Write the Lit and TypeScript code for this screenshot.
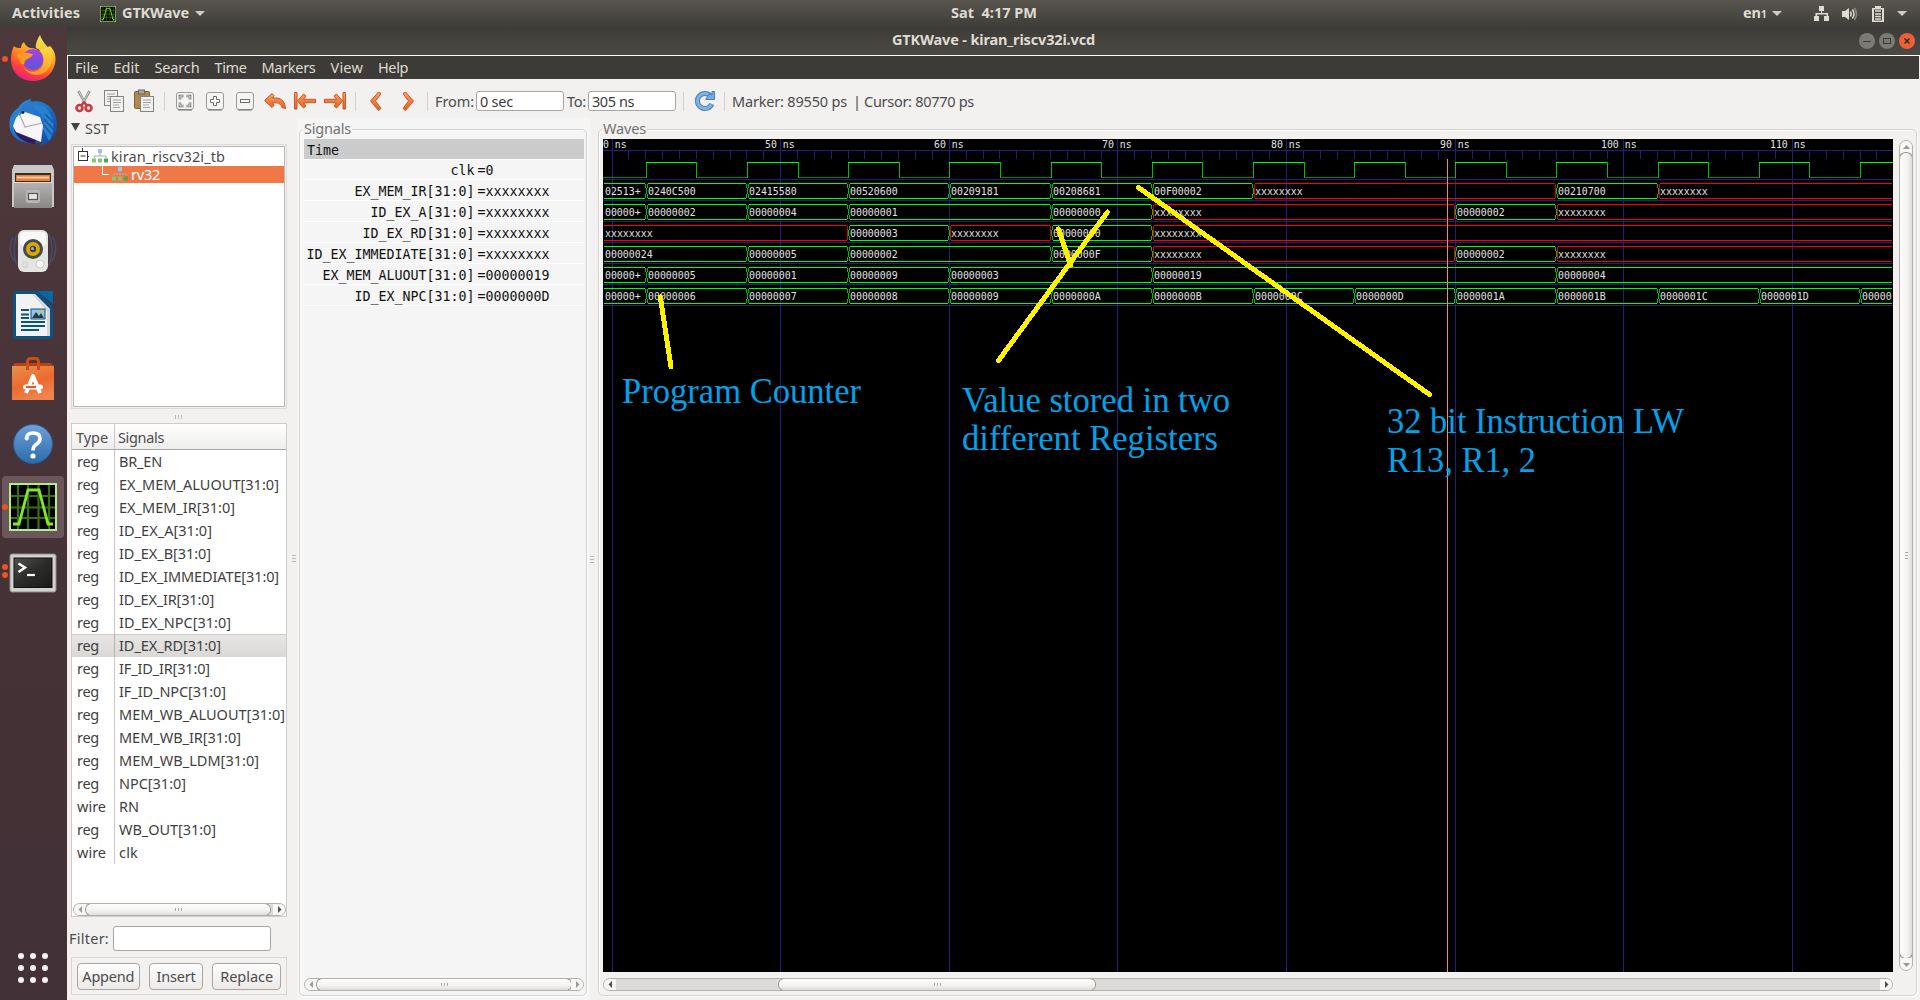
import { LitElement, html, svg, css } from "lit";
import { customElement, property } from "lit/decorators.js";

/* ---------- text label with a fixed advance width ---------- */
@customElement("fit-text")
class FitText extends LitElement {
  @property() text = "";
  @property({ type: Number }) w = 0;
  static styles = css`
    :host { display: inline-block; white-space: pre; }
    span { display: inline-block; }
  `;
  updated() {
    const s = this.renderRoot.querySelector("span") as HTMLElement;
    s.style.letterSpacing = "0px";
    const natural = s.getBoundingClientRect().width;
    const n = [...this.text].length;
    if (this.w && n) {
      s.style.letterSpacing = `${(this.w - natural) / n}px`;
      this.style.width = `${this.w}px`;
    }
  }
  render() {
    return html`<span>${this.text}</span>`;
  }
}

const t = (text: string, w: number) => html`<fit-text .text=${text} .w=${w}></fit-text>`;

/* ---------- scroll bar ---------- */
@customElement("gtk-scroll")
class GtkScroll extends LitElement {
  @property() dir = "h";
  @property({ type: Number }) before = 0;
  @property({ type: Number }) after = 0;
  @property() dim = "both";
  static styles = css`
    :host { display: block; }
    .bar { display: flex; box-sizing: border-box; width: 100%; height: 100%; border: 1px solid #b3b0ac; border-radius: 7px; background: #dcdbd9; overflow: hidden; }
    .bar.v { flex-direction: column; }
    .end { flex: none; display: flex; align-items: center; justify-content: center; background: #f6f6f5; }
    .h .end { width: 12px; }
    .v .end { height: 12px; }
    .thumb { flex: 1; display: flex; align-items: center; justify-content: center; gap: 2px; border-radius: 7px; background: linear-gradient(#fdfdfc, #f3f2f1 60%, #dedcda); box-shadow: 0 0 0 1px #92908c; }
    .v .thumb { flex-direction: column; background: linear-gradient(90deg, #fdfdfc, #f3f2f1 60%, #dedcda); }
    .thumb i { width: 1px; height: 3px; background: #aaa; }
    .v .thumb i { width: 3px; height: 1px; }
    .gap { flex: none; }
    .a { fill: #9a9a98; }
    .d { fill: #4f4f4d; }
  `;
  render() {
    const v = this.dir === "v";
    const first = v ? "M0 5L3.5 1L7 5Z" : "M5 0L1.5 3.5L5 7Z";
    const last = v ? "M0 2L3.5 6L7 2Z" : "M2 0L5.5 3.5L2 7Z";
    const size = (n: number) => (v ? `height:${n}px` : `width:${n}px`);
    const cls = (side: string) => (this.dim === side || this.dim === "both" ? "a" : "d");
    return html`<div class="bar ${v ? "v" : "h"}">
      <div class="end"><svg width="7" height="7"><path class=${cls("first")} d=${first} /></svg></div>
      <div class="gap" style=${size(this.before)}></div>
      <div class="thumb"><i></i><i></i><i></i></div>
      <div class="gap" style=${size(this.after)}></div>
      <div class="end"><svg width="7" height="7"><path class=${cls("last")} d=${last} /></svg></div>
    </div>`;
  }
}

/* ---------- waveform area ---------- */
const X = "xxxxxxxx";
const BUSES: [number, string][][] = [
  [[40, "02513+"], [42, "0240C500"], [48, "02415580"], [54, "00520600"], [60, "00209181"], [66, "00208681"], [72, "00F00002"], [78, X], [96, "00210700"], [102, X]],
  [[40, "00000+"], [42, "00000002"], [48, "00000004"], [54, "00000001"], [66, "00000000"], [72, X], [90, "00000002"], [96, X]],
  [[40, X], [54, "00000003"], [60, X], [66, "00000000"], [72, X]],
  [[40, "00000024"], [48, "00000005"], [54, "00000002"], [66, "0000000F"], [72, X], [90, "00000002"], [96, X]],
  [[40, "00000+"], [42, "00000005"], [48, "00000001"], [54, "00000009"], [60, "00000003"], [72, "00000019"], [96, "00000004"]],
  [[40, "00000+"], [42, "00000006"], [48, "00000007"], [54, "00000008"], [60, "00000009"], [66, "0000000A"], [72, "0000000B"], [78, "0000000C"], [84, "0000000D"], [90, "0000001A"], [96, "0000001B"], [102, "0000001C"], [108, "0000001D"], [114, "00000"]],
];
const W = 1290;
const H = 833;
const pos = (ns: number) => 9 + 16.866 * (ns - 40);

@customElement("wave-view")
class WaveView extends LitElement {
  static styles = css`
    :host { display: block; width: 1290px; height: 833px; }
    svg { display: block; background: #000; }
    .px { shape-rendering: crispEdges; }
    .grid { fill: #20207c; }
    .g { fill: #00ff00; }
    .gv { fill: #00c000; }
    .gl { fill: #008800; }
    .r { fill: #ff0000; }
    .rv { fill: #e00000; }
    .marker { fill: #f58484; }
    .txt { font: 11px "DejaVu Sans Mono", "Liberation Mono", monospace; fill: #e2e2e2; }
    .note { font: 35px "Liberation Serif", "Times New Roman", serif; fill: #00a2e8; }
    .pen { stroke: #fff200; stroke-width: 5; stroke-linecap: round; fill: none; shape-rendering: crispEdges; }
  `;
  rect(c: string, x: number, y: number, w: number, h: number) {
    return svg`<rect class=${c} x=${x} y=${y} width=${w} height=${h} />`;
  }
  label(s: string, x: number, y: number) {
    return svg`<text class="txt" x=${x} y=${y} textLength=${s.length * 6 - 0.4} lengthAdjust="spacingAndGlyphs">${s}</text>`;
  }
  grid() {
    const out = [this.rect("grid", 0, 11, W, 1)];
    for (let k = 0; k <= 75; k++) {
      const x = Math.floor(pos(40 + k));
      out.push(k % 10 === 0 ? this.rect("grid", x, 0, 1, H) : this.rect("grid", x, 12, 1, 8));
    }
    for (let k = 0; k < 7; k++) out.push(this.rect("grid", 0, 40 + 21 * k, W, 1));
    return out;
  }
  clock() {
    const out = [this.rect("gl", 0, 38, 43, 1)];
    for (let ns = 42; ns < 118; ns += 6) {
      const a = Math.round(pos(ns));
      const b = Math.round(pos(ns + 3));
      const c = Math.round(pos(ns + 6));
      out.push(this.rect("gl", b, 38, c - b, 1));
      out.push(this.rect("gv", a, 23, 1, 16), this.rect("gv", b, 23, 1, 16));
      out.push(this.rect("g", a, 23, b - a, 1));
    }
    return out;
  }
  bus(spans: [number, string][], row: number) {
    const top = 44 + 21 * row;
    const bot = top + 15;
    return spans.map(([ns, value], i) => {
      const bad = value === X;
      const c = bad ? "r" : "g";
      const from = i === 0 ? 1 : Math.round(pos(ns)) + 2;
      const end = i + 1 < spans.length ? Math.round(pos(spans[i + 1][0])) : 0;
      const to = end ? end - 1 : 1289;
      const edge = (x: number, mid: number) => [
        this.rect(c + "v", x, top + 1, 1, 4),
        this.rect(c + "v", mid, top + 5, 1, 6),
        this.rect(c + "v", x, bot - 4, 1, 4),
      ];
      return [
        this.rect(c, from, top, to - from, 1),
        this.rect(c, from, bot, to - from, 1),
        i > 0 ? edge(from - 1, bad ? from - 1 : from - 2) : [],
        end ? edge(end - 1, bad ? end - 1 : end) : [],
        this.label(value, from + (i === 0 ? 1 : 0), top + 12),
      ];
    });
  }
  note(s: string, x: number, y: number, w: number) {
    return svg`<text class="note" x=${x} y=${y} textLength=${w} lengthAdjust="spacingAndGlyphs">${s}</text>`;
  }
  render() {
    return html`<svg width=${W} height=${H} viewBox="0 0 ${W} ${H}">
      <g class="px">${this.grid()}</g>
      ${[40, 50, 60, 70, 80, 90, 100, 110].map((n) => {
        const s = n === 40 ? "0 ns" : `${n} ns`;
        return this.label(s, n === 40 ? 0 : Math.floor(pos(n)) - (n > 99 ? 22 : 15), 9);
      })}
      <g class="px">${this.clock()}</g>
      <g class="px">${BUSES.map((b, i) => this.bus(b, i))}</g>
      <rect class="marker px" x="844" y="20" width="1" height="813" />
      <path class="pen" d="M57.3 158L68 228M395.5 221.500L504.500 73M455.500 90L467.500 126M535.500 48.500L826.500 255.500" />
      ${this.note("Program Counter", 19, 264, 239)}
      ${this.note("Value stored in two", 359, 272.500, 268)}
      ${this.note("different Registers", 359, 311, 256)}
      ${this.note("32 bit Instruction LW", 784, 293.500, 297)}
      ${this.note("R13, R1, 2", 784, 332.500, 149)}
    </svg>`;
  }
}

/* ---------- dock icons, 48 x 48 ---------- */
const gtkwave = (s: number) => html`<svg width=${s} height=${s} viewBox="0 0 48 48">
  <rect x="0" y="0" width="48" height="48" fill="#b6ec86" /><rect x="2" y="2" width="44" height="44" fill="#000" />
  <path d="M9 2V46M19 2V46M29.500 2V46M40 2V46M2 13H46M2 24.500H46M2 35H46" stroke="#3b6e12" stroke-width="2.200" />
  <path d="M4 41H10L19 7H30L39 41H44" fill="none" stroke="#84e62e" stroke-width="2.800" /></svg>`;

const firefox = html`<svg width="48" height="48" viewBox="0 0 48 48">
  <defs>
    <linearGradient id="fa" x1="0.8" y1="0" x2="0.300" y2="1"><stop offset="0" stop-color="#ffe43a" /><stop offset="0.450" stop-color="#ff8a1e" /><stop offset="0.750" stop-color="#ff4040" /><stop offset="1" stop-color="#e21c83" /></linearGradient>
    <linearGradient id="fb" x1="0" y1="0" x2="0" y2="1"><stop offset="0" stop-color="#a842e6" /><stop offset="1" stop-color="#5a55d6" /></linearGradient>
    <linearGradient id="fc" x1="0" y1="0" x2="0" y2="1"><stop offset="0" stop-color="#fff44f" /><stop offset="1" stop-color="#ffa022" /></linearGradient>
  </defs>
  <path d="M5 11C7 13 9 13 12 13C12 10 13 9 15 7C16 10 18 12 21 13C25 13 28 14 30 16L41 11C45 15 46.500 19 46.500 24C46 37 37 46 24 46C11 46 2 37 2 24C2 19 3 15 5 11Z" fill="url(#fa)" />
  <circle cx="24" cy="24.500" r="10.500" fill="url(#fb)" />
  <path d="M31 0C29 3 26 9 27 13C34 16 37 24 33 32C29 38 20 38 15 33C20 41 33 43 39 34C45 28 45 18 41 11C41 13 42 14 42 16C38 11 33 6 31 0Z" fill="url(#fc)" opacity="0.920" />
  <path d="M8 20C12 16 18 18 24 19C23 23 18 23 16 26C15 28 16 30 13 29C10 27 9 23 8 20Z" fill="#ff9a1f" />
</svg>`;

const thunderbird = html`<svg width="48" height="48" viewBox="0 0 48 48">
  <defs><linearGradient id="ta" x1="0" y1="0" x2="1" y2="1"><stop offset="0" stop-color="#2f8fd8" /><stop offset="0.500" stop-color="#1f6fc8" /><stop offset="1" stop-color="#123f90" /></linearGradient></defs>
  <path d="M9 9C12 4 16 1 22 0L21 3C35 -1 48 10 48 25C48 38 41 44 31 47L33 43C22 46 8 45 2 33C-1 25 0 15 9 9Z" fill="url(#ta)" />
  <path d="M5 31C8 39 16 44 26 45L28 38Z" fill="#321a5e" />
  <path d="M7 19L13 12L31 18L34 27L32 43L7 33L4 27Z" fill="#f6f6f8" />
  <path d="M10 14L16 28L33 24" fill="none" stroke="#a9abb5" stroke-width="1.200" />
  <path d="M10 17C11 8 17 3 23 2C21 6 22 9 26 11C20 12 13 13 10 17Z" fill="#2a78c6" />
  <path d="M26 11C34 14 36 22 34 30L40 42C47 32 46 18 36 8C31 5 25 6 23 6Z" fill="#2782cd" />
  <path d="M36 15L45 24M35 20L46 32M35 26L43 36" stroke="#1b56a8" stroke-width="1.500" /><circle cx="14" cy="13.500" r="1.300" fill="#111" /></svg>`;

const files = html`<svg width="48" height="48" viewBox="0 0 48 48">
  <defs><linearGradient id="ga" x1="0" y1="0" x2="0" y2="1"><stop offset="0" stop-color="#b4b3b1" /><stop offset="1" stop-color="#888785" /></linearGradient></defs>
  <path d="M5 2H43L45 7V44H3V7Z" fill="#c9c8c6" /><rect x="6" y="10" width="36" height="10" fill="#3b2a22" />
  <path d="M7 12H41V18H7Z" fill="#e88237" /><path d="M8 14.500H40" stroke="#ffe3c4" stroke-width="1.500" />
  <path d="M5 19H43V45H5Z" fill="url(#ga)" /><path d="M5 19.500H43" stroke="#dedddb" />
  <rect x="17" y="27" width="14" height="13" rx="2" fill="#b9b8b6" /><rect x="19.500" y="30.500" width="9" height="6" fill="#e6e6e6" stroke="#555" stroke-width="1.200" /></svg>`;

const rhythm = html`<svg width="48" height="48" viewBox="0 0 48 48">
  <path d="M4 10Q-2 22 5 34M8 7Q2 22 8 38M44 10Q50 22 43 34M40 7Q46 22 40 38" fill="none" stroke="#49557f" stroke-width="1.500" opacity="0.700" />
  <rect x="9" y="3" width="30" height="42" rx="6" fill="#e4e4e2" /><rect x="11" y="5" width="26" height="14" rx="4" fill="#f8f8f7" />
  <circle cx="24" cy="22" r="10" fill="#45484c" /><circle cx="24" cy="22" r="7" fill="#d9a900" /><circle cx="24" cy="22" r="3.200" fill="#3c4048" /><circle cx="23.500" cy="21.500" r="1.500" fill="#a9b1bd" />
  <circle cx="31" cy="37" r="4" fill="#f9f9f8" stroke="#c9c9c6" /><rect x="14" y="35" width="4" height="5" fill="none" stroke="#cfcfcc" /></svg>`;

const writer = html`<svg width="48" height="48" viewBox="0 0 48 48">
  <path d="M7 0H28L44 16V45Q44 48 41 48H7Q4 48 4 45V3Q4 0 7 0Z" fill="#0b5384" /><path d="M7 3H26L41 18V45H7Z" fill="#f2f2f2" />
  <path d="M28 0H44V13Z" fill="#0368a4" /><path d="M25 3L41 19V45H38V20L23 3Z" fill="#d5d5d5" />
  <path d="M12 19H20M12 23.500H20M12 27H20M12 31H36M12 35H36M12 39H30" stroke="#0b5384" stroke-width="2" />
  <rect x="22" y="18" width="14" height="10" fill="#8fc8e8" stroke="#0b5384" /><path d="M23 27L27 21L30 25L32 22L35 27Z" fill="#2e3a40" /><circle cx="33" cy="20.500" r="1.500" fill="#efbd2e" /></svg>`;

const software = html`<svg width="48" height="48" viewBox="0 0 48 48">
  <defs><linearGradient id="sa" x1="0" y1="0" x2="0.400" y2="1"><stop offset="0" stop-color="#e6914f" /><stop offset="0.600" stop-color="#ec6a2c" /><stop offset="1" stop-color="#f0824e" /></linearGradient></defs>
  <path d="M3 12L6 8H42L45 12Z" fill="#b94013" /><rect x="3" y="11" width="42" height="34" fill="url(#sa)" />
  <path d="M18.500 15V7Q18.500 3.500 22 3.500H26Q29.500 3.500 29.500 7V15" fill="none" stroke="#cf4a1b" stroke-width="3" />
  <path d="M17 38L24 21L31 38" fill="none" stroke="#fff" stroke-width="4" stroke-linejoin="round" /><rect x="14" y="29.500" width="20" height="5" rx="2.500" fill="#fff" /><rect x="17" y="31" width="10" height="2" fill="#e95420" /></svg>`;

const help = html`<svg width="48" height="48" viewBox="0 0 48 48">
  <defs><linearGradient id="ha" x1="0" y1="0" x2="0" y2="1"><stop offset="0" stop-color="#6f9fd8" /><stop offset="1" stop-color="#2b6cab" /></linearGradient></defs>
  <circle cx="24" cy="25" r="19.500" fill="url(#ha)" stroke="#275e9b" />
  <path d="M17.500 20Q17.500 14 24 14Q31 14 31 19.500Q31 23 27 25.500Q24 27.500 24 31.500" fill="none" stroke="#fff" stroke-width="3.600" /><circle cx="17.800" cy="19.500" r="2" fill="#fff" /><circle cx="24" cy="37" r="2.600" fill="#fff" /></svg>`;

const terminal = html`<svg width="48" height="48" viewBox="0 0 48 48">
  <defs><linearGradient id="tt" x1="0" y1="0" x2="1" y2="1"><stop offset="0" stop-color="#50504e" /><stop offset="0.500" stop-color="#2b2b2a" /><stop offset="1" stop-color="#1a1a19" /></linearGradient></defs>
  <rect x="1" y="7" width="46" height="38" rx="2" fill="#d3d2d0" stroke="#8b8a88" /><rect x="5" y="11" width="38" height="29.500" fill="url(#tt)" stroke="#111" />
  <path d="M9.500 16.500L16 20.500L9.500 25" fill="none" stroke="#fff" stroke-width="2.400" /><path d="M18 28H26" stroke="#fff" stroke-width="2.200" /></svg>`;

/* ---------- toolbar icons, 24 x 24 ---------- */
const tb = (inner: unknown) => html`<svg width="24" height="24" viewBox="0 0 24 24">${inner}</svg>`;
const page = (x: number, y: number) => svg`<rect x=${x} y=${y} width="13" height="15" fill="#f0f0ee" stroke="#848480" />
  <path d=${`M${x + 2.500} ${y + 3.500}h8M${x + 2.500} ${y + 6}h8M${x + 2.500} ${y + 8.500}h6M${x + 2.500} ${y + 11}h7`} stroke="#a5a5a2" />`;
const cut = tb(svg`<path d="M6.500 2L14 16M17.500 2L10 16" stroke="#8a8a88" stroke-width="2.600" /><path d="M7 2.500L13 14M17 2.500L11 14" stroke="#d4d4d2" />
  <ellipse cx="7.500" cy="19" rx="3" ry="3" fill="none" stroke="#cc3a3f" stroke-width="2.600" /><ellipse cx="16.500" cy="19" rx="3" ry="3" fill="none" stroke="#cc3a3f" stroke-width="2.600" /><path d="M9 16.500L12 13L15 16.500" fill="none" stroke="#cc3a3f" stroke-width="2" />`);
const copy = tb(svg`${page(2.5, 1.5)}${page(8.5, 7.5)}`);
const paste = tb(svg`<rect x="2.500" y="2.500" width="15" height="17" rx="1" fill="#b08850" stroke="#83602f" /><rect x="6.500" y="1" width="6" height="4" fill="#a8a8a4" stroke="#666" />${page(8.5, 7.5)}`);
const box = svg`<rect x="3.500" y="3.500" width="17" height="17" rx="2.500" fill="#f4f4f2" stroke="#9a9a97" /><path d="M5 21H19" stroke="#6f6f6c" />`;
const fit = tb(svg`${box}<path d="M7 10.500V7H10.500M13.500 7H17V10.500M17 13.500V17H13.500M10.500 17H7V13.500" fill="none" stroke="#6d6d6a" stroke-width="2.600" /><path d="M7 10.500V7H10.500M13.500 7H17V10.500M17 13.500V17H13.500M10.500 17H7V13.500" fill="none" stroke="#fff" stroke-width="0.800" />`);
const plus = tb(svg`${box}<path d="M10.500 7.500H13.500V10.500H16.500V13.500H13.500V16.500H10.500V13.500H7.500V10.500H10.500Z" fill="#fff" stroke="#6d6d6a" />`);
const minus = tb(svg`${box}<rect x="7.500" y="10.500" width="9" height="3" fill="#fff" stroke="#6d6d6a" />`);
const grad = svg`<defs><linearGradient id="o" x1="0" y1="0" x2="0" y2="1"><stop offset="0" stop-color="#f5a45c" /><stop offset="1" stop-color="#ea5e2a" /></linearGradient></defs>`;
const undo = tb(svg`${grad}<path d="M1.500 11.500L9 4.500L11 6.500L9.500 9H14Q22 10 22.500 19.500L19 18.500Q18 14 13 13.800H9.500L11 16.500L9 18.500Z" fill="url(#o)" stroke="#d05525" />`);
const first = tb(svg`${grad}<path d="M1.500 3.500H4V20H1.500ZM4.500 12L10.500 5L13 7L10.500 10.300H22.500V13.700H10.500L13 17L10.500 19Z" fill="url(#o)" stroke="#d05525" />`);
const last = tb(svg`${grad}<path d="M22.500 3.500H20V20H22.500ZM19.500 12L13.500 5L11 7L13.500 10.300H1.500V13.700H13.500L11 17L13.500 19Z" fill="url(#o)" stroke="#d05525" />`);
const prev = tb(svg`${grad}<path d="M14.500 3L17 4.500L11.500 12L17 19.500L14.500 21.500L6.500 12Z" fill="url(#o)" stroke="#d05525" stroke-linejoin="round" />`);
const next = tb(svg`${grad}<path d="M9.500 3L7 4.500L12.500 12L7 19.500L9.500 21.500L17.500 12Z" fill="url(#o)" stroke="#d05525" stroke-linejoin="round" />`);
const reload = tb(svg`<path d="M18.800 15A7.500 7.500 0 1 1 17.500 7" fill="none" stroke="#4482bf" stroke-width="5" /><path d="M18.500 15.500A7.500 7.500 0 1 1 17.500 7" fill="none" stroke="#86b2e0" stroke-width="3" /><path d="M12.500 10.500L21.500 10.500V2.500H19V6L16 5Z" fill="#7cabdc" stroke="#4482bf" />`);
const tree = html`<svg class="node" width="16" height="14" viewBox="0 0 16 14"><rect x="6" y="0" width="4" height="4" fill="#9cc3ee" /><path d="M8 4V7M2 9V7H14V9" fill="none" stroke="#aaa" />
  <rect x="0" y="9.500" width="4" height="4" fill="#7ccb74" /><rect x="6" y="9.500" width="4" height="4" fill="#7ccb74" /><rect x="12" y="9.500" width="4" height="4" fill="#4fa64b" /></svg>`;
const caret = html`<svg class="caret" width="10" height="5"><path d="M0 0H10L5 5Z" fill="#d0cdc6" /></svg>`;

const ROWS: [string, string, number][] = [
  ["reg", "BR_EN", 43], ["reg", "EX_MEM_ALUOUT[31:0]", 160], ["reg", "EX_MEM_IR[31:0]", 116], ["reg", "ID_EX_A[31:0]", 93],
  ["reg", "ID_EX_B[31:0]", 92], ["reg", "ID_EX_IMMEDIATE[31:0]", 160], ["reg", "ID_EX_IR[31:0]", 95], ["reg", "ID_EX_NPC[31:0]", 112],
  ["reg", "ID_EX_RD[31:0]", 102], ["reg", "IF_ID_IR[31:0]", 91], ["reg", "IF_ID_NPC[31:0]", 107], ["reg", "MEM_WB_ALUOUT[31:0]", 166],
  ["reg", "MEM_WB_IR[31:0]", 122], ["reg", "MEM_WB_LDM[31:0]", 140], ["reg", "NPC[31:0]", 67], ["wire", "RN", 20], ["reg", "WB_OUT[31:0]", 97], ["wire", "clk", 19],
];
const SIGNALS: [string, string][] = [
  ["clk", "0"], ["EX_MEM_IR[31:0]", X], ["ID_EX_A[31:0]", X], ["ID_EX_RD[31:0]", X], ["ID_EX_IMMEDIATE[31:0]", X], ["EX_MEM_ALUOUT[31:0]", "00000019"], ["ID_EX_NPC[31:0]", "0000000D"],
];

@customElement("app-root")
class AppRoot extends LitElement {
  static styles = css`
    :host { display: block; width: 1920px; height: 1000px; overflow: hidden; font: 14.5px "Noto Sans", "Open Sans", sans-serif; color: #4c4c4c; background: #f2f1f0; }
    * { box-sizing: border-box; }
    svg { display: block; }
    .topbar { display: flex; align-items: center; height: 27px; line-height: 27px; background: linear-gradient(#59564f, #3e3d39); color: #dfdbd2; font-weight: 700; padding-left: 12px; }
    .topbar fit-text { margin-top: -1px; height: 28px; line-height: 26px; }
    .topbar .app { display: flex; align-items: center; margin-left: 20px; gap: 6px; width: 851px; }
    .topbar .lang { margin-left: 706px; display: flex; align-items: center; gap: 5px; }
    .topbar .tray { margin-left: 32px; display: flex; align-items: center; }
    .sub { font-size: 10px; }
    .below { display: flex; height: 973px; }
    .dock { width: 67px; flex: none; display: flex; flex-direction: column; background: linear-gradient(#4f383c, #443237 60%, #423136); }
    .slot { height: 64px; flex: none; display: grid; grid-template-columns: 2px 6px 1px 48px; align-items: center; }
    .slot .pips { grid-column: 2; display: flex; flex-direction: column; gap: 2px; }
    .slot .pips i { width: 6px; height: 6px; border-radius: 3px; background: #e95420; }
    .slot svg { grid-column: 4; }
    .slot.on { margin: 1px 3px 1px 2px; height: 62px; border-radius: 4px; background: #6b565b; grid-template-columns: 0 6px 1px 48px; }
    .apps { margin: auto 0 17px 18px; display: grid; grid-template-columns: repeat(3, 6px); gap: 6px; }
    .apps i { width: 6px; height: 6px; border-radius: 3px; background: #f4f2f0; }
    .win { flex: 1; display: flex; flex-direction: column; min-width: 0; }
    .title { display: flex; height: 29px; padding-left: 825px; padding-right: 5px; line-height: 25px; font-weight: 700; color: #dfdbd2; background: linear-gradient(#3c3b37, #4b4a44); border-bottom: 1px solid #fff; flex: none; }
    .title .btns { margin-left: auto; padding-top: 6px; display: flex; gap: 4px; }
    .menu { display: flex; flex: none; gap: 15px; height: 23px; line-height: 22px; margin: 0 1px; padding-left: 7px; background: #3c3b37; color: #dfdbd2; }
    .tools { display: flex; flex: none; align-items: center; height: 39px; padding: 5px 0 0 2px; }
    .tools > svg { margin: 0 3px; }
    .tools > fit-text { line-height: 20px; margin-top: -1px; }
    .tools .sep { width: 1px; height: 19px; background: #d5d3d1; margin: 0 5px; }
    .entry { height: 20px; line-height: 18px; background: #fff; border: 1px solid #a9a6a2; border-radius: 3px; padding-left: 3px; color: #3c3c3c; }
    .tools .entry { width: 88px; }
    .body { display: flex; flex: 1; min-height: 0; }
    .left { width: 230px; flex: none; display: flex; flex-direction: column; padding-left: 4px; }
    .sst { display: flex; height: 26px; align-items: flex-start; line-height: 20px; gap: 5px; flex: none; }
    .sst svg { margin-top: 5px; }
    .tree { width: 216px; height: 265px; margin-bottom: 13px; flex: none; border: 1px solid #dddbd9; padding: 1px; }
    .tree .in { height: 100%; border: 1px solid #b9b6b2; background: #fff; padding-top: 1px; }
    .trow { display: flex; height: 17px; line-height: 16px; }
    .trow.first { height: 18px; line-height: 17px; padding-left: 4px; }
    .trow.sel { background: #f07746; color: #fff; padding-left: 28px; }
    .node { margin: 1px 3px 0 3px; }
    .grip { display: flex; gap: 2px; }
    .grip i { width: 1px; height: 4px; background: #bbb8b5; }
    .grip.h { justify-content: center; height: 4px; margin: -7px 12px 4px 0; flex: none; }
    .grip.v { flex-direction: column; width: 4px; }
    .grip.v i { width: 4px; height: 1px; }
    .table { width: 216px; height: 494px; flex: none; border: 1px solid #cfccca; background: #fff; display: flex; flex-direction: column; }
    .head { display: flex; height: 26px; flex: none; line-height: 26px; border-bottom: 1px solid #a9a6a0; background: linear-gradient(#fff, #ededec); }
    .c1 { width: 43px; flex: none; padding-left: 5px; border-right: 1px solid #cbc9c7; }
    .c2 { padding-left: 4px; white-space: nowrap; }
    .head .c2 { padding-left: 3px; }
    .head .c1 { padding-left: 4px; }
    .row { display: flex; height: 23px; line-height: 22px; flex: none; color: #3f3f3f; }
    .row.sel { background: linear-gradient(#e8e7e5, #dad8d6); box-shadow: inset 0 1px #cfcdca; }
    .row.sel .c1 { border-color: #b5b3b0; }
    .table gtk-scroll { margin: auto 0 0 1px; height: 13px; }
    .filter { display: flex; align-items: center; margin: 8px 0 6px -2px; height: 26px; flex: none; gap: 4px; line-height: 20px; }
    .filter .entry { width: 158px; height: 25px; }
    .buttons { display: flex; width: 216px; height: 38px; flex: none; gap: 9px; padding: 5px; border: 1px solid #d8d6d4; }
    .btn { height: 27px; line-height: 25px; border: 1px solid #a9a6a2; border-radius: 4px; background: linear-gradient(#fdfdfd, #eceae9); text-align: center; }
    .sigpane { width: 293px; flex: none; background: #f5f5f5; padding: 11px 3px 4px 2px; }
    .frame { border: 1px solid #d4d2d0; border-radius: 5px; height: 867px; box-shadow: inset 1px 1px #fff, 1px 1px #fff; }
    .legend { display: table; line-height: 18px; height: 20px; margin: -11px 0 0 3px; padding: 0 1px; background: inherit; color: #737270; }
    .sigpane .legend { background: #f5f5f5; }
    .siglist { width: 280px; height: 839px; margin: 0 0 0 4px; font: 13.3px "DejaVu Sans Mono", "Liberation Mono", monospace; color: #111; }
    .time { height: 20px; line-height: 20px; padding: 2px 0 0 3px; background: #cbcbcb; }
    .sig { display: grid; grid-template-columns: 170.5px 1fr; column-gap: 3px; height: 21px; line-height: 19px; padding-top: 1.5px; border-top: 1px solid #fff; }
    .sig:nth-child(2) { height: 20px; padding-top: 0.5px; }
    .sig span { text-align: right; white-space: pre; }
    .end { border-top: 1px solid #fff; }
    .sigpane gtk-scroll { width: 280px; height: 13px; margin-left: 4px; }
    .split { width: 8px; flex: none; display: flex; align-items: center; justify-content: flex-start; }
    .waves { flex: 1; padding: 11px 3px 4px 0; }
    .waves .legend { background: #f2f1f0; }
    .wgrid { display: grid; grid-template-columns: 1290px 14px; column-gap: 6px; row-gap: 6px; margin-left: 4px; }
    .wgrid .vs { height: 831px; margin-top: 1px; }
    .wgrid .hs { height: 13px; }
    .left .grip.edge { position: absolute; left: 292px; top: 555px; }
  `;
  slot(icon: unknown, pips = 0, on = false) {
    return html`<div class="slot ${on ? "on" : ""}"><div class="pips">${Array.from({ length: pips }, () => html`<i></i>`)}</div>${icon}</div>`;
  }
  render() {
    const bars = html`<i></i><i></i><i></i>`;
    return html`
      <div class="topbar">
        ${t("Activities", 68)}
        <div class="app">${gtkwave(16)} ${t("GTKWave", 67)} ${caret}</div>
        ${t("Sat  4:17 PM", 86)}
        <div class="lang"><span>${t("en", 18)}<span class="sub">1</span></span>${caret}</div>
        <div class="tray">
          <svg width="16" height="16" viewBox="0 0 16 16" fill="#dfdbd2"><path d="M5 0H10V5H8V7H14V10H15V15H10V10H12.500V8.500H3V10H5V15H0V10H1.500V7H7V5H5Z" /></svg>
          <svg style="margin-left:12px" width="16" height="16" viewBox="0 0 16 16"><path d="M0 5H3L7 2V14L3 11H0Z" fill="#dfdbd2" /><path d="M8.500 5.500Q10 8 8.500 10.500M10.500 3.500Q13.500 8 10.500 12.500" fill="none" stroke="#dfdbd2" stroke-width="1.500" /><path d="M12.500 2Q16.500 8 12.500 14" fill="none" stroke="#8a8780" stroke-width="1.500" /></svg>
          <svg style="margin-left:14px" width="13" height="16" viewBox="0 0 13 16"><path d="M3 2V0H9V2H12V16H0V2Z" fill="#dfdbd2" /><path d="M2 3.500H10V14.500H2Z" fill="#45443f" /><path d="M3 5H9M3 8H9M3 10.500H9M3 13H9" stroke="#dfdbd2" stroke-width="1.500" /></svg>
          <span style="margin-left:12px">${caret}</span>
        </div>
      </div>
      <div class="below">
        <div class="dock">
          ${this.slot(firefox, 1)} ${this.slot(thunderbird)} ${this.slot(files)} ${this.slot(rhythm)} ${this.slot(writer)} ${this.slot(software)}
          ${this.slot(help)} ${this.slot(gtkwave(48), 1, true)} ${this.slot(terminal, 2)}
          <div class="apps">${Array.from({ length: 9 }, () => html`<i></i>`)}</div>
        </div>
        <div class="win">
          <div class="title">
            ${t("GTKWave - kiran_riscv32i.vcd", 203)}
            <div class="btns">
              <svg width="16" height="16"><circle cx="8" cy="8" r="8" fill="#7b7a75" /><path d="M4 8.500H12" stroke="#3c3b37" /></svg>
              <svg width="16" height="16"><circle cx="8" cy="8" r="8" fill="#7b7a75" /><rect x="4.500" y="5.500" width="7" height="5" fill="none" stroke="#3c3b37" /></svg>
              <svg width="16" height="16"><circle cx="8" cy="8" r="8" fill="#ec6038" /><path d="M5.500 5.500L10.500 10.500M10.500 5.500L5.500 10.500" stroke="#3c2a20" stroke-width="1.500" /></svg>
            </div>
          </div>
          <div class="menu">${t("File", 23.5)}${t("Edit", 26)}${t("Search", 45)}${t("Time", 32)}${t("Markers", 54)}${t("View", 32.5)}${t("Help", 30)}</div>
          <div class="tools">
            ${cut}${copy}${paste}<div class="sep"></div>${fit}${plus}${minus}${undo}${first}${last}<div class="sep"></div>
            ${prev}<span style="width:2px"></span>${next}<div class="sep" style="margin:0 7px 0 4px"></div>
            ${t("From:", 39)}<div class="entry" style="margin:0 3px 0 2px">${t("0 sec", 33)}</div>
            ${t("To:", 19)}<div class="entry" style="margin:0 7px 0 2px">${t("305 ns", 42)}</div>
            <div class="sep" style="margin:0 6px 0 0"></div>${reload}<div class="sep" style="margin:0 7px 0 4px"></div>
            ${t("Marker: 89550 ps", 115)}<span style="width:6px"></span>${t("|", 11)}${t("Cursor: 80770 ps", 110)}
          </div>
          <div class="body">
            <div class="left">
              <div class="sst"><svg width="9" height="8"><path d="M0 0H9L4.500 8Z" fill="#444" /></svg>${t("SST", 24)}</div>
              <div class="tree"><div class="in">
                <div class="trow first"><svg width="11" height="18"><path d="M4.500 0V3M8.500 8.500H11" stroke="#333" /><rect x="0.500" y="3.500" width="9" height="9" fill="#fff" stroke="#333" /><path d="M2.500 8H7.500" stroke="#333" /></svg>${tree}${t("kiran_riscv32i_tb", 114)}</div>
                <div class="trow sel"><svg width="7" height="17"><path d="M0.500 0V8.500H7" fill="none" stroke="#fff" /></svg>${tree}${t("rv32", 29)}</div>
              </div></div>
              <div class="grip h">${bars}</div>
              <div class="table">
                <div class="head"><div class="c1">${t("Type", 32)}</div><div class="c2">${t("Signals", 46)}</div></div>
                ${ROWS.map(([k, n, w], i) => html`<div class="row ${i === 8 ? "sel" : ""}"><div class="c1">${t(k, k === "reg" ? 22 : 29)}</div><div class="c2">${t(n, w)}</div></div>`)}
                <gtk-scroll dim="first" .after=${3}></gtk-scroll>
              </div>
              <div class="filter">${t("Filter:", 40)}<div class="entry"></div></div>
              <div class="buttons"><div class="btn" style="width:63px">${t("Append", 52)}</div><div class="btn" style="width:55px">${t("Insert", 39)}</div><div class="btn" style="width:69px">${t("Replace", 53)}</div></div>
              <div class="grip v edge">${bars}</div>
            </div>
            <div class="sigpane"><div class="frame">
              <div class="legend">${t("Signals", 47)}</div>
              <div class="siglist">
                <div class="time">Time</div>
                ${SIGNALS.map(([n, v]) => html`<div class="sig"><span>${n}</span><div>=${v}</div></div>`)}
                <div class="end"></div>
              </div>
              <gtk-scroll></gtk-scroll>
            </div></div>
            <div class="split"><div class="grip v">${bars}</div></div>
            <div class="waves"><div class="frame">
              <div class="legend">${t("Waves", 43)}</div>
              <div class="wgrid">
                <wave-view></wave-view><gtk-scroll class="vs" dir="v"></gtk-scroll>
                <gtk-scroll class="hs" dim="none" .before=${163} .after=${785}></gtk-scroll>
              </div>
            </div></div>
          </div>
        </div>
      </div>`;
  }
}
